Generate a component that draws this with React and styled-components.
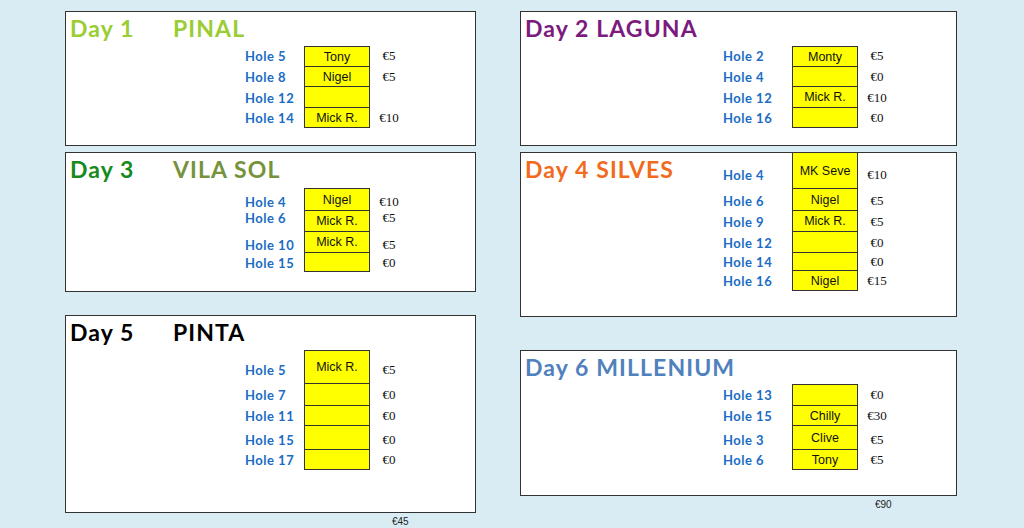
import styled, { createGlobalStyle } from "styled-components"

const GlobalStyle = createGlobalStyle`
    html, body {
        margin: 0;
        background: #daecf3;
    }
    body {
        font-family: "Liberation Sans", Arial, sans-serif;
    }
`

const LEFT = { lead: 179, labelW: 59, dayW: 103 }
const RIGHT = { lead: 202, labelW: 69, dayW: 0 }

// rows: [hole, player, amount, row height, label nudge]
const leftColumn = {
    total: "€45",
    totalX: 327,
    panels: [
        {
            day: "Day 1",
            dayColor: "#9acd32",
            name: "PINAL",
            nameColor: "#9acd32",
            height: 135,
            top: 0,
            gap: 0,
            rows: [
                ["Hole 5", "Tony", "€5", 21, -1],
                ["Hole 8", "Nigel", "€5", 20],
                ["Hole 12", "", "", 21],
                ["Hole 14", "Mick R.", "€10", 20],
            ],
        },
        {
            day: "Day 3",
            dayColor: "#178a1d",
            name: "VILA SOL",
            nameColor: "#76923c",
            height: 140,
            top: 1,
            gap: 6,
            rows: [
                ["Hole 4", "Nigel", "€10", 23, 2],
                ["Hole 6", "Mick R.", "€5", 21, -4],
                ["Hole 10", "Mick R.", "€5", 21, 2],
                ["Hole 15", "", "€0", 19],
            ],
        },
        {
            day: "Day 5",
            dayColor: "#000",
            name: "PINTA",
            nameColor: "#000",
            height: 198,
            top: 0,
            gap: 23,
            rows: [
                ["Hole 5", "Mick R.", "€5", 34, 3],
                ["Hole 7", "", "€0", 22],
                ["Hole 11", "", "€0", 20],
                ["Hole 15", "", "€0", 24, 2],
                ["Hole 17", "", "€0", 20],
            ],
        },
    ],
}

const rightColumn = {
    total: "€90",
    totalX: 355,
    panels: [
        {
            day: "Day 2",
            dayColor: "#7b1b80",
            name: "LAGUNA",
            nameColor: "#7b1b80",
            height: 135,
            top: 0,
            gap: 0,
            rows: [
                ["Hole 2", "Monty", "€5", 21, -1],
                ["Hole 4", "", "€0", 20],
                ["Hole 12", "Mick R.", "€10", 21],
                ["Hole 16", "", "€0", 20],
            ],
        },
        {
            day: "Day 4",
            dayColor: "#f26b1d",
            name: "SILVES",
            nameColor: "#f26b1d",
            height: 165,
            top: -1,
            gap: 6,
            side: true,
            rows: [
                ["Hole 4", "MK Seve", "€10", 37, 4],
                ["Hole 6", "Nigel", "€5", 22, 1],
                ["Hole 9", "Mick R.", "€5", 21],
                ["Hole 12", "", "€0", 21],
                ["Hole 14", "", "€0", 18],
                ["Hole 16", "Nigel", "€15", 20],
            ],
        },
        {
            day: "Day 6",
            dayColor: "#4f81bd",
            name: "MILLENIUM",
            nameColor: "#4f81bd",
            height: 146,
            top: -1,
            gap: 33,
            rows: [
                ["Hole 13", "", "€0", 22],
                ["Hole 15", "Chilly", "€30", 20],
                ["Hole 3", "Clive", "€5", 24, 2],
                ["Hole 6", "Tony", "€5", 20],
            ],
        },
    ],
}

function DayPanel({ panel, layout }) {
    return (
        <Panel $height={panel.height} $gap={panel.gap} $lead={layout.lead}>
            <Title $side={panel.side}>
                <DayPart $color={panel.dayColor} $width={layout.dayW}>
                    {panel.day}
                </DayPart>
                {layout.dayW ? "" : " "}
                <span style={{ color: panel.nameColor }}>{panel.name}</span>
            </Title>
            <Table $top={panel.top}>
                {panel.rows.map(([hole, player, amount, h, nudge = 0], i) => (
                    <Row key={i} $labelW={layout.labelW} $height={h}>
                        <HoleLabel $nudge={nudge}>{hole}</HoleLabel>
                        <PlayerBox $first={i === 0}>{player}</PlayerBox>
                        <Amount $nudge={nudge}>{amount}</Amount>
                    </Row>
                ))}
            </Table>
        </Panel>
    )
}

function Column({ data, layout, width }) {
    return (
        <ColumnWrap $width={width}>
            {data.panels.map((p) => (
                <DayPanel key={p.day} panel={p} layout={layout} />
            ))}
            <Total $x={data.totalX}>{data.total}</Total>
        </ColumnWrap>
    )
}

export default function App() {
    return (
        <Page>
            <GlobalStyle />
            <Column data={leftColumn} layout={LEFT} width={411} />
            <Column data={rightColumn} layout={RIGHT} width={437} />
        </Page>
    )
}

const Page = styled.div`
    display: flex;
    align-items: flex-start;
    gap: 44px;
    width: 1024px;
    height: 528px;
    box-sizing: border-box;
    padding: 11px 0 0 65px;
    overflow: hidden;
`

const ColumnWrap = styled.div`
    display: flex;
    flex-direction: column;
    width: ${(p) => p.$width}px;
`

const Panel = styled.section`
    box-sizing: border-box;
    height: ${(p) => p.$height}px;
    margin-top: ${(p) => p.$gap}px;
    background: #fff;
    border: 1px solid #333;
    display: grid;
    grid-template-columns: ${(p) => p.$lead}px auto;
    align-content: start;
`

const Title = styled.h2`
    grid-column: ${(p) => (p.$side ? "1" : "1 / -1")};
    margin: 0;
    height: 34px;
    box-sizing: border-box;
    padding: 3px 0 0 4px;
    line-height: 26px;
    font-family: "Comic Sans MS", Lato, "DejaVu Sans", sans-serif;
    font-weight: 700;
    font-size: 23px;
    letter-spacing: 1.1px;
    white-space: nowrap;
`

const DayPart = styled.span`
    display: inline-block;
    color: ${(p) => p.$color};
    min-width: ${(p) => p.$width}px;
`

const Table = styled.div`
    grid-column: 2;
    margin-top: ${(p) => p.$top}px;
    display: flex;
    flex-direction: column;
`

const Row = styled.div`
    display: grid;
    grid-template-columns: ${(p) => p.$labelW}px 66px 38px;
    height: ${(p) => p.$height}px;
    align-items: center;
`

const HoleLabel = styled.span`
    position: relative;
    top: ${(p) => p.$nudge}px;
    font-family: "Comic Sans MS", Lato, "DejaVu Sans", sans-serif;
    font-weight: 700;
    font-size: 13px;
    letter-spacing: 0.5px;
    color: #1a6cc4;
    white-space: nowrap;
`

const PlayerBox = styled.div`
    box-sizing: border-box;
    align-self: stretch;
    display: flex;
    align-items: center;
    justify-content: center;
    background: #ffff00;
    border: 1px solid #333;
    border-top-width: ${(p) => (p.$first ? 1 : 0)}px;
    font-family: "Liberation Sans", Arial, sans-serif;
    font-size: 12.5px;
    color: #111;
`

const Amount = styled.span`
    position: relative;
    top: ${(p) => p.$nudge}px;
    text-align: center;
    font-family: "Liberation Serif", "Times New Roman", serif;
    font-size: 13px;
    color: #111;
`

const Total = styled.div`
    padding-left: ${(p) => p.$x}px;
    margin-top: 3px;
    font-family: "Liberation Sans", Arial, sans-serif;
    font-size: 10px;
    color: #222;
`
